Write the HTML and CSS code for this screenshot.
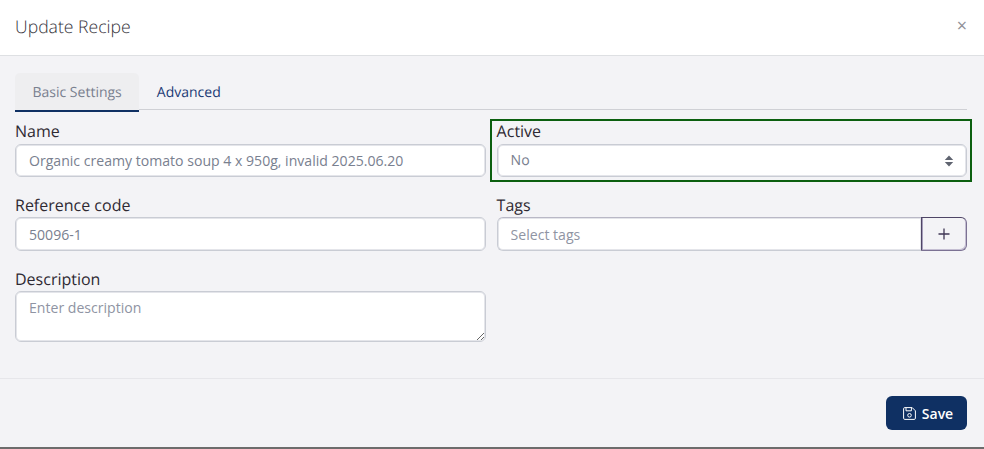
FILE: index.html
```html
<!DOCTYPE html>
<html lang="en">
<head>
<meta charset="utf-8">
<title>Update Recipe</title>
<link rel="stylesheet" href="styles.css">
</head>
<body>
<div class="modal">
  <header class="modal-header">
    <h1 class="modal-title">Update Recipe</h1>
    <button class="close" type="button" aria-label="Close">×</button>
  </header>
  <main class="modal-body">
    <nav class="tabs">
      <a class="tab active">Basic Settings</a>
      <a class="tab">Advanced</a>
    </nav>
    <form class="form-grid">
      <div class="field">
        <label class="label">Name</label>
        <input class="control" type="text" value="Organic creamy tomato soup 4 x 950g, invalid 2025.06.20">
      </div>
      <div class="field highlighted">
        <label class="label">Active</label>
        <div class="control select">
          <span>No</span>
          <svg class="sort" width="10" height="12" viewBox="0 0 10 12" aria-hidden="true"><path d="M5 .6 9.2 5H.8zM5 11.4.8 7h8.4z"/></svg>
        </div>
      </div>
      <div class="field">
        <label class="label">Reference code</label>
        <input class="control" type="text" value="50096-1">
      </div>
      <div class="field">
        <label class="label">Tags</label>
        <div class="input-group">
          <input class="control grouped" type="text" placeholder="Select tags">
          <button class="add" type="button" aria-label="Add tag">
            <svg width="12" height="12" viewBox="0 0 12 12" aria-hidden="true"><path d="M6 .5v11M.5 6h11"/></svg>
          </button>
        </div>
      </div>
      <div class="field">
        <label class="label">Description</label>
        <textarea class="control area" placeholder="Enter description"></textarea>
      </div>
    </form>
  </main>
  <footer class="modal-footer">
    <button class="save" type="button">
      <svg width="13" height="13" viewBox="0 0 13 13" aria-hidden="true"><path class="disk" d="M1.8.6h7.4l3.2 3.2v7.4a1.2 1.2 0 0 1-1.2 1.2H1.8a1.2 1.2 0 0 1-1.2-1.2V1.8A1.2 1.2 0 0 1 1.8.6z"/><path class="disk" d="M3 .8v3h5.4v-3"/><circle class="disk" cx="6.5" cy="8.3" r="1.8"/></svg>
      <span>Save</span>
    </button>
  </footer>
</div>
</body>
</html>
```
FILE: styles.css
```css
* { box-sizing: border-box; }
html, body { margin: 0; height: 100%; }
body {
  font-family: "Open Sans", sans-serif;
  font-size: 14px;
  color: #2f2a33;
  background: #f3f3f6;
  overflow: hidden;
  text-rendering: geometricPrecision;
}
.modal {
  height: 449px;
  display: flex;
  flex-direction: column;
  border-bottom: 2px solid #6c6c6c;
}
.modal-header {
  height: 56px;
  flex: none;
  background: #fff;
  border-bottom: 1px solid #dee0e3;
  display: flex;
  align-items: center;
  justify-content: space-between;
  padding: 0 17px 2px 15px;
}
.modal-title {
  margin: 0;
  font-size: 17.6px;
  font-weight: 300;
  line-height: 24px;
  color: #35323a;
}
.close {
  border: 0;
  padding: 0;
  background: none;
  font: 400 18px/18px "Open Sans", sans-serif;
  color: #8f9096;
  margin-top: -4px;
}
.modal-body {
  flex: none;
  height: 322px;
  padding: 17px 17px 0 15px;
}
.tabs {
  display: flex;
  height: 37px;
  border-bottom: 1px solid #cfd0d5;
}
.tab {
  height: 37px;
  padding: 1px 17.5px 0;
  display: flex;
  align-items: center;
  font-size: 14px;
  color: #1a3a75;
}
.tab.active {
  color: #79808f;
  background: #eeeef0;
  border-bottom: 2px solid #0f3063;
  border-radius: 5px 5px 0 0;
  height: 39px;
  padding-top: 2px;
}
.form-grid {
  display: grid;
  grid-template-columns: 470.6px 1fr;
  column-gap: 11px;
  row-gap: 17.6px;
  padding-top: 11px;
  align-items: start;
}
.field { position: relative; min-width: 0; }
.highlighted::after {
  content: "";
  position: absolute;
  inset: -2px -5px -4.8px -6.6px;
  border: 2px solid #0b5f0f;
  pointer-events: none;
}
.label {
  display: block;
  font-size: 16px;
  line-height: 21px;
  margin-bottom: 1.6px;
  color: #2f2a33;
}
.control {
  display: block;
  width: 100%;
  height: 33.6px;
  padding: 0 13px;
  border: 1px solid #c9ccd4;
  border-radius: 6px;
  box-shadow: inset 0 0 0 1px #e4e5ea;
  background: #fff;
  font: 400 14.08px "Open Sans", sans-serif;
  color: #79808f;
  outline: 0;
}
.control::placeholder { color: #8f94a3; opacity: 1; }
.select {
  display: flex;
  align-items: center;
  justify-content: space-between;
  padding: 1px 12px 0 13px;
}
.sort { fill: #5f6470; }
.input-group { display: flex; }
.grouped {
  flex: 1;
  min-width: 0;
  border-radius: 6px 0 0 6px;
  border-right: 0;
  border-top-color: #b9b8c6;
}
.add {
  width: 46px;
  height: 33.6px;
  flex: none;
  padding: 0;
  display: flex;
  align-items: center;
  justify-content: center;
  background: #f3f3f6;
  border: 1px solid #4e4566;
  border-right-color: #7b7193;
  border-bottom-color: #7b7193;
  border-radius: 0 6px 6px 0;
  box-shadow: inset 1px 0 0 #a59dba, inset -1px -1px 0 #c4bed2;
}
.add svg { fill: none; stroke: #3f3654; stroke-width: 1.3; }
.area {
  height: 51.2px;
  padding-top: 6px;
  resize: vertical;
}
.modal-footer {
  flex: 1;
  border-top: 1px solid #e6e6ea;
  display: flex;
  justify-content: flex-end;
  align-items: flex-start;
  padding: 17px 17px 0 0;
}
.save {
  width: 81px;
  height: 34px;
  display: flex;
  align-items: center;
  justify-content: center;
  gap: 6px;
  border: 0;
  border-radius: 6px;
  background: #0f3063;
  color: #fff;
  font: 600 14px "Open Sans", sans-serif;
  padding: 0 0 0 3px;
}
.disk { fill: none; stroke: #fff; stroke-width: 1; }
```
